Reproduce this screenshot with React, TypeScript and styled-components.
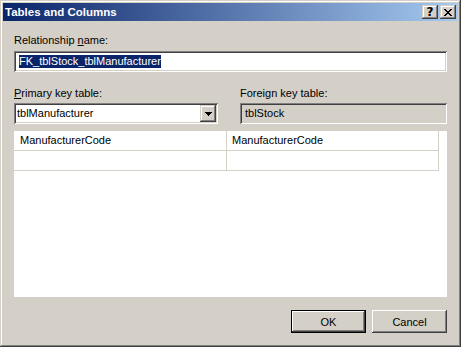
import React from 'react';
import styled, { createGlobalStyle } from 'styled-components';

const Global = createGlobalStyle`
  html, body { margin: 0; padding: 0; background: #d4d0c8; }
  body { font-family: "Liberation Sans", Arial, sans-serif; font-size: 11px; color: #000; }
`;

const raised = `box-shadow: inset -1px -1px #404040, inset 1px 1px #d4d0c8, inset -2px -2px #808080, inset 2px 2px #ffffff;`;
const sunken = `box-shadow: inset 1px 1px #808080, inset -1px -1px #ffffff, inset 2px 2px #404040, inset -2px -2px #d4d0c8;`;

const Window = styled.div`
  width: 461px;
  height: 347px;
  box-sizing: border-box;
  padding: 3px;
  background: #d4d0c8;
  ${raised}
  display: flex;
  flex-direction: column;
`;

const TitleBar = styled.div`
  height: 18px;
  flex: none;
  display: flex;
  align-items: center;
  padding: 0 2px;
  background: linear-gradient(90deg, #0a246a, #a6caf0);
`;

const Title = styled.div`
  flex: 1;
  color: #fff;
  font-weight: bold;
  font-size: 11.5px;
  line-height: 14px;
`;

const CaptionButtons = styled.div`
  display: flex;
  gap: 2px;
`;

const CaptionButton = styled.div`
  width: 16px;
  height: 14px;
  box-sizing: border-box;
  background: #d4d0c8;
  ${raised}
  display: flex;
  align-items: center;
  justify-content: center;
  font-family: "DejaVu Sans", sans-serif;
  font-weight: bold;
  font-size: 12px;
  line-height: 14px;
`;

const Client = styled.div`
  flex: 1;
  display: flex;
  flex-direction: column;
  padding: 13px 11px 11px 11px;
`;

const Label = styled.div`
  height: 13px;
  line-height: 13px;
  white-space: nowrap;
`;

const Field = styled.div<{ $disabled?: boolean }>`
  height: 21px;
  box-sizing: border-box;
  background: ${(p) => (p.$disabled ? '#d4d0c8' : '#fff')};
  ${sunken}
  padding: 4px 3px 0 5px;
  line-height: 13px;
  white-space: nowrap;
  overflow: hidden;
`;

const Selected = styled.span`
  background: #0a246a;
  color: #fff;
  display: inline-block;
  line-height: 13px;
`;

const Group = styled.div<{ $gap: number }>`
  display: flex;
  flex-direction: column;
  gap: ${(p) => p.$gap}px;
`;

const TableRow = styled.div`
  display: grid;
  grid-template-columns: 204px 207px;
  column-gap: 22px;
  margin-top: 15px;
`;

const Combo = styled.div`
  height: 21px;
  box-sizing: border-box;
  background: #fff;
  ${sunken}
  padding: 2px;
  display: flex;
  align-items: center;
`;

const ComboText = styled.div`
  flex: 1;
  padding-left: 1px;
  line-height: 13px;
`;

const DropButton = styled.div`
  width: 16px;
  height: 17px;
  box-sizing: border-box;
  background: #d4d0c8;
  ${raised}
  display: flex;
  align-items: center;
  justify-content: center;
`;

const GridBox = styled.div`
  margin-top: 7px;
  flex: 1;
  background: #fff;
  padding-right: 7px;
`;

const GridTable = styled.div`
  display: grid;
  grid-template-columns: 213px 212px;
  grid-auto-rows: 20px;
`;

const Cell = styled.div<{ $pad: number }>`
  border-right: 1px solid #d4d0c8;
  border-bottom: 1px solid #d4d0c8;
  padding-left: ${(p) => p.$pad}px;
  line-height: 19px;
  white-space: nowrap;
`;

const ButtonRow = styled.div`
  margin-top: 13px;
  display: flex;
  justify-content: flex-end;
  gap: 6px;
`;

const Button = styled.div<{ $default?: boolean }>`
  width: 75px;
  height: 23px;
  box-sizing: border-box;
  background: #d4d0c8;
  display: flex;
  align-items: center;
  justify-content: center;
  ${(p) =>
    p.$default
      ? `box-shadow: inset 0 0 0 1px #000, inset -2px -2px #404040, inset 2px 2px #ffffff, inset -3px -3px #808080;`
      : `box-shadow: inset -1px -1px #404040, inset 1px 1px #ffffff, inset -2px -2px #808080, inset 2px 2px #d4d0c8;`}
`;

const CloseGlyph = () => (
  <svg width="8" height="7" viewBox="0 0 8 7" shapeRendering="crispEdges">
    <path
      fill="#000"
      d="M0 0h2v1H0zM6 0h2v1H6zM1 1h2v1H1zM5 1h2v1H5zM2 2h4v1H2zM3 3h2v1H3zM2 4h4v1H2zM1 5h2v1H1zM5 5h2v1H5zM0 6h2v1H0zM6 6h2v1H6z"
    />
  </svg>
);

const DownArrow = () => (
  <svg width="7" height="4" viewBox="0 0 7 4" shapeRendering="crispEdges">
    <path fill="#000" d="M0 0h7v1H0zM1 1h5v1H1zM2 2h3v1H2zM3 3h1v1H3z" />
  </svg>
);

export default function App() {
  return (
    <>
      <Global />
      <Window>
        <TitleBar>
          <Title>Tables and Columns</Title>
          <CaptionButtons>
            <CaptionButton>?</CaptionButton>
            <CaptionButton>
              <CloseGlyph />
            </CaptionButton>
          </CaptionButtons>
        </TitleBar>
        <Client>
          <Group $gap={4}>
            <Label>
              Relationship <u>n</u>ame:
            </Label>
            <Field>
              <Selected>FK_tblStock_tblManufacturer</Selected>
            </Field>
          </Group>
          <TableRow>
            <Group $gap={3}>
              <Label>
                <u>P</u>rimary key table:
              </Label>
              <Combo>
                <ComboText>tblManufacturer</ComboText>
                <DropButton>
                  <DownArrow />
                </DropButton>
              </Combo>
            </Group>
            <Group $gap={3}>
              <Label>Foreign key table:</Label>
              <Field $disabled>tblStock</Field>
            </Group>
          </TableRow>
          <GridBox>
            <GridTable>
              <Cell $pad={6}>ManufacturerCode</Cell>
              <Cell $pad={5}>ManufacturerCode</Cell>
              <Cell $pad={6} />
              <Cell $pad={5} />
            </GridTable>
          </GridBox>
          <ButtonRow>
            <Button $default>OK</Button>
            <Button>Cancel</Button>
          </ButtonRow>
        </Client>
      </Window>
    </>
  );
}
